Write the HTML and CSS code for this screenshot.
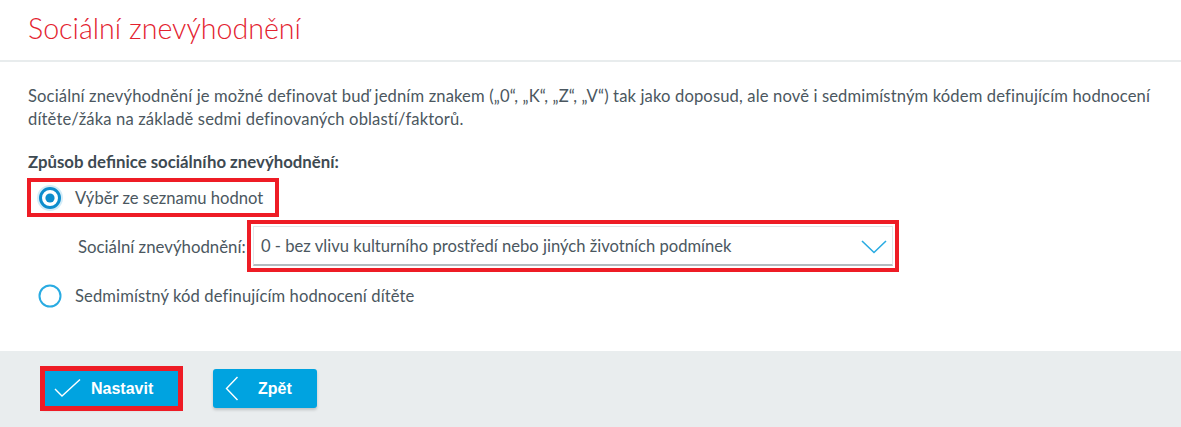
FILE: index.html
```html
<!DOCTYPE html>
<html lang="cs">
<head>
<meta charset="utf-8">
<title>Sociální znevýhodnění</title>
<link rel="stylesheet" href="styles.css">
</head>
<body>
<div class="page">
  <header class="head">
    <h1 class="title">Sociální znevýhodnění</h1>
  </header>
  <main class="content">
    <p class="intro">Sociální znevýhodnění je možné definovat buď jedním znakem („0“, „K“, „Z“, „V“) tak jako doposud, ale nově i sedmimístným kódem definujícím hodnocení dítěte/žáka na základě sedmi definovaných oblastí/faktorů.</p>
    <div class="group-title">Způsob definice sociálního znevýhodnění:</div>
    <label class="radio-row marked">
      <svg class="radio" width="26" height="26" viewBox="0 0 26 26">
        <circle cx="13" cy="13" r="13" fill="#d3ecf8"/>
        <circle cx="13" cy="13" r="9.5" fill="#fff" stroke="#0d8dcd" stroke-width="3"/>
        <circle cx="13" cy="13" r="4.6" fill="#0d8dcd"/>
      </svg>
      <span class="radio-text">Výběr ze seznamu hodnot</span>
    </label>
    <div class="select-row">
      <span class="select-label">Sociální znevýhodnění:</span>
      <div class="select marked-select">
        <span class="select-value">0 - bez vlivu kulturního prostředí nebo jiných životních podmínek</span>
        <svg class="chevron" width="26" height="14" viewBox="0 0 26 14">
          <polyline points="1,1 13,12.5 25,1" fill="none" stroke="#29abe2" stroke-width="1.6"/>
        </svg>
      </div>
    </div>
    <label class="radio-row last">
      <svg class="radio" width="26" height="26" viewBox="0 0 26 26">
        <circle cx="13" cy="13" r="10.5" fill="#fff" stroke="#29abe2" stroke-width="2"/>
      </svg>
      <span class="radio-text wide">Sedmimístný kód definujícím hodnocení dítěte</span>
    </label>
  </main>
  <footer class="actions">
    <button class="btn btn-primary marked-btn" type="button">
      <svg class="btn-icon" width="28" height="20" viewBox="0 0 28 20">
        <polyline points="2,10 9,17 27,0.5" fill="none" stroke="#fff" stroke-width="1.4"/>
      </svg>
      <span>Nastavit</span>
    </button>
    <button class="btn btn-back" type="button">
      <svg class="btn-icon" width="14" height="26" viewBox="0 0 14 26">
        <polyline points="12.5,1 1.5,12.5 12.5,24" fill="none" stroke="#fff" stroke-width="1.4"/>
      </svg>
      <span>Zpět</span>
    </button>
  </footer>
</div>
</body>
</html>
```

FILE: styles.css
```css
* { box-sizing: border-box; }

html, body {
  margin: 0;
  padding: 0;
  background: #fff;
}

body {
  font-family: Lato, "Noto Sans", "Liberation Sans", sans-serif;
  color: #4b5760;
}

.page {
  width: 1181px;
  min-height: 427px;
  display: flex;
  flex-direction: column;
}

.head {
  height: 62px;
  border-bottom: 2px solid #e8eced;
  padding: 0 28px;
  display: flex;
  align-items: center;
}

.title {
  margin: 0;
  font-size: 28.6px;
  font-weight: 300;
  color: #e3222f;
  line-height: 40px;
  padding-bottom: 4px;
}

.content {
  padding: 23px 28px 37px;
  display: flex;
  flex-direction: column;
  align-items: flex-start;
}

.intro {
  margin: 0;
  font-size: 16.6px;
  letter-spacing: 0.13px;
  line-height: 23px;
}

.group-title {
  margin-top: 19px;
  font-size: 16.8px;
  line-height: 23px;
  font-weight: 700;
  color: #3e4a52;
}

.radio-row {
  display: inline-flex;
  align-items: center;
  height: 37px;
  padding: 0 15px 0 9px;
  gap: 12px;
  font-size: 16.6px;
}

.radio-row.marked {
  margin-top: 6px;
  outline: 4px solid #ee1c25;
  outline-offset: -3px;
}

.radio-row.last {
  margin-top: 11px;
}

.radio { flex: none; display: block; }

.radio-text { line-height: 20px; }

.radio-text.wide { letter-spacing: 0.1px; }

.select-row {
  margin-top: 10px;
  display: flex;
  align-items: center;
  padding-left: 50px;
}

.select-label {
  width: 175px;
  font-size: 16.8px;
}

.select {
  width: 640px;
  height: 40px;
  border: 1px solid #e2e6e9;
  border-bottom: 2px solid #b3bbc0;
  background: #fff;
  display: flex;
  align-items: center;
  justify-content: space-between;
  padding: 0 5px 0 7px;
}

.marked-select {
  outline: 4px solid #ee1c25;
  outline-offset: 2px;
}

.select-value {
  font-size: 16.6px;
  color: #4b5760;
}

.chevron { display: block; margin-top: 2px; }

.actions {
  flex: 1;
  background: #e9edee;
  padding: 18px 43px;
  display: flex;
  align-items: flex-start;
  gap: 33px;
}

.btn {
  height: 39px;
  border: 0;
  border-radius: 3px;
  background: #00a3e0;
  color: #fff;
  font-family: "Liberation Sans", Arial, sans-serif;
  font-weight: 700;
  font-size: 16px;
  display: flex;
  align-items: center;
  cursor: pointer;
  box-shadow: 0 2px 3px rgba(0, 0, 0, 0.18);
}

.btn-primary {
  width: 137px;
  padding: 0 0 0 10px;
  gap: 10px;
  border-radius: 0;
}

.marked-btn {
  outline: 5px solid #ee1c25;
  outline-offset: -2px;
}

.btn-back {
  width: 104px;
  padding: 0 0 0 12px;
  gap: 19px;
}

.btn-icon { display: block; flex: none; }
```
